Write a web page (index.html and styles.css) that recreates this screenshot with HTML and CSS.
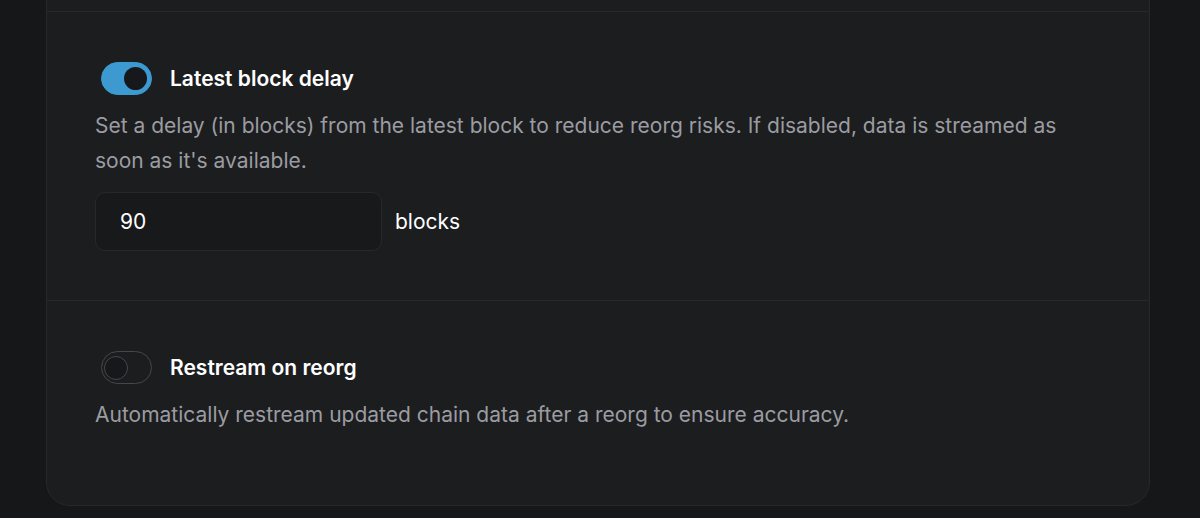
FILE: index.html
```html
<!DOCTYPE html>
<html lang="en">
<head>
    <meta charset="UTF-8">
    <meta name="viewport" content="width=device-width, initial-scale=1.0">
    <title>Stream settings</title>
    <link rel="stylesheet" href="styles.css">
</head>
<body>

<div class="card">
    <div class="section section-top"></div>

    <div class="section section-first">
        <div class="toggle-row">
            <span class="toggle on"><span class="knob"></span></span>
            <span class="toggle-label">Latest block delay</span>
        </div>
        <p class="desc">Set a delay (in blocks) from the latest block to reduce reorg risks. If disabled, data is streamed as soon as it's available.</p>
        <div class="input-row">
            <input type="text" class="num-input" value="90">
            <span class="unit">blocks</span>
        </div>
    </div>

    <div class="section section-last">
        <div class="toggle-row">
            <span class="toggle"><span class="knob"></span></span>
            <span class="toggle-label">Restream on reorg</span>
        </div>
        <p class="desc">Automatically restream updated chain data after a reorg to ensure accuracy.</p>
    </div>
</div>

</body>
</html>
```

FILE: styles.css
```css
body {
    margin: 0;
    padding: 0;
    background-color: #161719;
    font-family: Inter, "Noto Sans", sans-serif;
    color: #fff;
}

.card {
    width: 1102px;
    margin: -30px 0 0 46px;
    background-color: #1c1d1f;
    border: 1px solid #27282b;
    border-radius: 24px;
}

.section {
    padding: 50px 48px 50px 48px;
    border-bottom: 1px solid #27282b;
}

.section-top {
    height: 40px;
    padding: 0;
}

.section-first {
    padding-bottom: 49px;
}

.section-last {
    border-bottom: none;
    padding-bottom: 73px;
}

.toggle-row {
    display: flex;
    align-items: center;
    height: 33px;
}

.toggle {
    box-sizing: border-box;
    display: flex;
    align-items: center;
    width: 51px;
    height: 33px;
    margin-left: 6px;
    padding: 0 4px;
    border: 1px solid #46474b;
    border-radius: 17px;
}

.toggle .knob {
    box-sizing: border-box;
    width: 24px;
    height: 24px;
    border-radius: 50%;
    background-color: #17181b;
    border: 1px solid #46474b;
    margin-left: -2px;
}

.toggle.on {
    background-color: #3c9ad1;
    border-color: #3c9ad1;
    justify-content: flex-end;
}

.toggle.on .knob {
    width: 23px;
    height: 23px;
    border: none;
    margin: 0;
}

.toggle-label {
    margin-left: 18px;
    font-size: 21px;
    font-weight: 600;
}

.desc {
    margin: 13px 0 0 0;
    font-size: 21px;
    line-height: 35px;
    color: #9b9ca1;
}

.input-row {
    display: flex;
    align-items: center;
    margin-top: 14px;
}

.num-input {
    box-sizing: border-box;
    width: 287px;
    height: 59px;
    padding: 0 24px;
    background-color: #18191b;
    border: 1px solid #27282b;
    border-radius: 10px;
    color: #fff;
    font-family: Inter, "Noto Sans", sans-serif;
    font-size: 21px;
    outline: none;
}

.unit {
    margin-left: 13px;
    font-size: 21px;
}
```
